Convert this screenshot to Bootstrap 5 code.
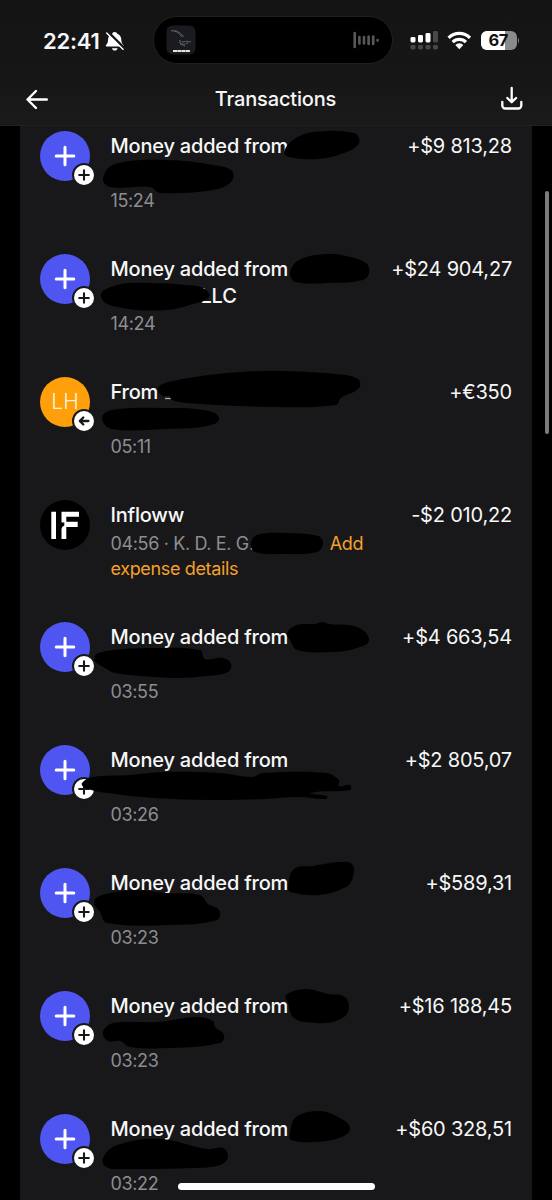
<!DOCTYPE html>
<html lang="en">
<head>
<meta charset="utf-8">
<meta name="viewport" content="width=device-width, initial-scale=1">
<title>Transactions</title>
<link href="https://cdn.jsdelivr.net/npm/bootstrap@5.3.0/dist/css/bootstrap.min.css" rel="stylesheet">
<style>
body{background:#000;color:#f7f7f8;font-family:Inter,"Liberation Sans",sans-serif;height:1200px;overflow:hidden}
.screen{width:552px;height:1200px}
.topbar{height:126px;background:linear-gradient(#141415,#161617 60%,#1a1a1b);border-bottom:1px solid #202022}
.status{height:80px;padding-top:16px}
.clock{font-size:22px;font-weight:600;line-height:50px;margin-left:43px;width:62px;letter-spacing:-.2px}
.island{width:240px;height:48px;border-radius:24px;background:#000;border:1px solid #202021;margin-left:28px;padding:0 13px 0 12px}
.appbar{height:38px}
.appbar h1{font-size:20px;font-weight:450;line-height:38px;letter-spacing:-.17px;padding-left:2px}
.sheet{width:512px;height:1074px;margin-left:20px;background:#18181a;padding:5px 20px 0}
.txn{height:123px;gap:20.5px}
.txn.short{height:122px}
.avatar{width:50px;height:50px;flex:none;border-radius:50%;background:#4f55f1}
.avatar.person{background:#ff9f0a;color:#fff2dc;font-size:21px;font-weight:300}
.avatar.brand{background:#000}
.mini{left:32px;top:32px;width:24px;height:24px;border-radius:50%;background:#fff;border:2px solid #18181a}
.ttl{font-size:20px;font-weight:470;line-height:27px;letter-spacing:-.2px;padding-top:2px;width:255px}
.llc{padding-left:90px}
.sub{font-size:18px;line-height:25px;color:#8d8d91;margin-top:1px;letter-spacing:-.36px;font-weight:400}
.txn.short .sub{margin-top:2px;width:255px}
.add{color:#f5a12c}
.gap-name{margin-left:76px}
.amt{font-size:20px;line-height:27px;padding-top:2px;font-weight:400;letter-spacing:-.2px}
.marks{left:0;top:0;pointer-events:none}
.thumb{left:545px;top:191px;width:4px;height:243px;border-radius:2px;background:#7c7c7e}
.home{left:178px;top:1183px;width:197px;height:7px;border-radius:4px;background:#fff}
</style>
</head>
<body>
<svg class="d-none">
  <symbol id="plus" viewBox="0 0 50 50"><path d="M25 16.200v17.600M16.200 25h17.600" stroke="#fff" stroke-width="3" stroke-linecap="round"/></symbol>
  <symbol id="plus-s" viewBox="0 0 20 20"><path d="M10 5.200v9.600M5.200 10h9.600" stroke="#18181a" stroke-width="2.100" stroke-linecap="round"/></symbol>
  <symbol id="left-s" viewBox="0 0 20 20"><path d="M14.400 10H5.900M9.300 6.500 5.800 10l3.500 3.500" fill="none" stroke="#18181a" stroke-width="2.300" stroke-linecap="round" stroke-linejoin="round"/></symbol>
</svg>
<div class="screen position-relative overflow-hidden">
  <header class="topbar">
    <div class="status d-flex align-items-start">
      <div class="clock">22:41</div>
      <svg width="20" height="50" viewBox="105 16 20 50"><path d="M114.700 32c-1.600 0-2.300 1-2.500 1.800-3 1-4.200 3.600-4.200 6.700 0 2-.8 3.200-1.900 4.500-.6.800-.2 1.600.7 1.600h15.900c.9 0 1.200-.8.600-1.600-1.100-1.300-1.900-2.500-1.900-4.500 0-3.100-1.200-5.700-4.200-6.700-.2-.8-.9-1.800-2.500-1.800zM112 48.200c.3 1.500 1.400 2.300 2.800 2.300s2.500-.8 2.800-2.300z" fill="#fff"/><path d="M107.500 31.500 124 48" stroke="#151516" stroke-width="2.600"/><path d="M106.700 33 123 49.200" stroke="#fff" stroke-width="1.500" stroke-linecap="round"/></svg>
      <div class="island d-flex align-items-center justify-content-between">
        <svg width="30" height="30" viewBox="0 0 30 30"><rect x=".5" y=".5" width="29" height="29" rx="6" fill="#1a1b1e"/><path d="M5 6c5-1 9 1 13 6M8 6c4 1 6 3 8 6M13 15c3 4 6 0 12 2M13 17c4 3 6 3 10 0M14 19l5 2" fill="none" stroke="#68717f" stroke-width=".9" stroke-dasharray="3 .6"/><path d="M7 26h17" stroke="#e4e4e4" stroke-width="2" stroke-dasharray="4 .3"/></svg>
        <svg width="27" height="18" viewBox="0 0 27 18"><g stroke="#59595c" stroke-width="2.600" stroke-linecap="round"><path d="M2.700 2v14"/><path d="M7.400 6v6.500M12 6v6.500M16.600 5.500v7.500M21.200 5.500v7.500M25.600 9v.4"/></g></svg>
      </div>
      <svg width="109" height="50" viewBox="408 16 109 50" style="margin-left:15px">
        <g fill="#fff"><rect x="410.500" y="37" width="5" height="5.500" rx="1.400"/><rect x="418" y="35" width="5" height="7.500" rx="1.400"/><rect x="425.500" y="33" width="5" height="9.500" rx="1.400"/></g>
        <g fill="#48484a"><rect x="433" y="31" width="5" height="11.500" rx="1.400"/><rect x="410.500" y="45" width="5" height="4.500" rx="1.400"/><rect x="418" y="45" width="5" height="4.500" rx="1.400"/><rect x="425.500" y="45" width="5" height="4.500" rx="1.400"/><rect x="433" y="45" width="5" height="4.500" rx="1.400"/></g>
        <g fill="none" stroke="#fff" stroke-width="3.200"><path d="M448.600 37.800a15.200 15.200 0 0 1 21.400 0"/><path d="M452.700 42.200a9.200 9.200 0 0 1 13.200 0"/></g><path d="M455.300 45a5.600 5.600 0 0 1 8 0l-4 4.300z" fill="#fff"/>
        <clipPath id="cell"><rect x="481" y="31" width="36" height="19" rx="6"/></clipPath>
        <g clip-path="url(#cell)"><rect x="481" y="31" width="36" height="19" fill="#8b8b8c"/><rect x="481" y="31" width="24" height="19" fill="#fff"/></g>
        <text x="498.300" y="46.400" text-anchor="middle" font-size="16.500" font-weight="700" letter-spacing="-.4" fill="#111">67</text>
      </svg>
      <svg width="3" height="50" viewBox="517 16 3 50"><path d="M518 37.500q2 3 0 6z" fill="#8b8b8c"/></svg>
    </div>
    <div class="appbar d-flex align-items-center position-relative">
      <svg width="26" height="24" viewBox="24 87 26 24" style="margin-left:24px"><path d="M46.800 99.500H27.500M36 91l-8.500 8.500L36 108" fill="none" stroke="#fff" stroke-width="2.400" stroke-linecap="round" stroke-linejoin="round"/></svg>
      <h1 class="m-0 flex-fill text-center">Transactions</h1>
      <svg width="26" height="26" viewBox="499 86 26 26" style="margin-right:27px"><path d="M511.700 88v13.500M507.300 98l4.400 4.300 4.400-4.300M502.300 102v3.500a3 3 0 0 0 3 3h13a3 3 0 0 0 3-3V102" fill="none" stroke="#fff" stroke-width="2.300" stroke-linecap="round" stroke-linejoin="round"/></svg>
    </div>
  </header>

  <main class="sheet">
    <div class="txn d-flex"><div class="avatar position-relative"><svg width="50" height="50"><use href="#plus"/></svg><span class="mini position-absolute d-flex"><svg width="20" height="20"><use href="#plus-s"/></svg></span></div><div><div class="ttl">Money added from<br>&nbsp;</div><div class="sub">15:24</div></div><div class="amt ms-auto text-nowrap">+$9 813,28</div></div>
    <div class="txn d-flex"><div class="avatar position-relative"><svg width="50" height="50"><use href="#plus"/></svg><span class="mini position-absolute d-flex"><svg width="20" height="20"><use href="#plus-s"/></svg></span></div><div><div class="ttl">Money added from<br><span class="llc">LLC</span></div><div class="sub">14:24</div></div><div class="amt ms-auto text-nowrap">+$24 904,27</div></div>
    <div class="txn d-flex"><div class="avatar person position-relative d-flex align-items-center justify-content-center">LH<span class="mini position-absolute d-flex"><svg width="20" height="20"><use href="#left-s"/></svg></span></div><div><div class="ttl">From<br>&nbsp;</div><div class="sub">05:11</div></div><div class="amt ms-auto text-nowrap">+€350</div></div>
    <div class="txn short d-flex"><div class="avatar brand"><svg width="50" height="50" viewBox="0 0 50 50"><path d="M11.300 11.700H16V39h-4.700zM21.500 11.700H39v5H26.300v5H37.700V27H26.300v12h-4.800V29q0-2.500 2.800-3.500v-3h-2.800z" fill="#fff"/></svg></div><div><div class="ttl">Infloww</div><div class="sub text-nowrap">04:56 · K. D. E. G.<span class="add gap-name">Add</span><br><span class="add">expense details</span></div></div><div class="amt ms-auto text-nowrap">-$2 010,22</div></div>
    <div class="txn d-flex"><div class="avatar position-relative"><svg width="50" height="50"><use href="#plus"/></svg><span class="mini position-absolute d-flex"><svg width="20" height="20"><use href="#plus-s"/></svg></span></div><div><div class="ttl">Money added from<br>&nbsp;</div><div class="sub">03:55</div></div><div class="amt ms-auto text-nowrap">+$4 663,54</div></div>
    <div class="txn d-flex"><div class="avatar position-relative"><svg width="50" height="50"><use href="#plus"/></svg><span class="mini position-absolute d-flex"><svg width="20" height="20"><use href="#plus-s"/></svg></span></div><div><div class="ttl">Money added from<br>&nbsp;</div><div class="sub">03:26</div></div><div class="amt ms-auto text-nowrap">+$2 805,07</div></div>
    <div class="txn d-flex"><div class="avatar position-relative"><svg width="50" height="50"><use href="#plus"/></svg><span class="mini position-absolute d-flex"><svg width="20" height="20"><use href="#plus-s"/></svg></span></div><div><div class="ttl">Money added from<br>&nbsp;</div><div class="sub">03:23</div></div><div class="amt ms-auto text-nowrap">+$589,31</div></div>
    <div class="txn d-flex"><div class="avatar position-relative"><svg width="50" height="50"><use href="#plus"/></svg><span class="mini position-absolute d-flex"><svg width="20" height="20"><use href="#plus-s"/></svg></span></div><div><div class="ttl">Money added from<br>&nbsp;</div><div class="sub">03:23</div></div><div class="amt ms-auto text-nowrap">+$16 188,45</div></div>
    <div class="txn d-flex"><div class="avatar position-relative"><svg width="50" height="50"><use href="#plus"/></svg><span class="mini position-absolute d-flex"><svg width="20" height="20"><use href="#plus-s"/></svg></span></div><div><div class="ttl">Money added from<br>&nbsp;</div><div class="sub">03:22</div></div><div class="amt ms-auto text-nowrap">+$60 328,51</div></div>
  </main>

  <svg id="marks" class="marks position-absolute" width="552" height="1200"><path d="M165 398.500h6" stroke="#aaa" stroke-width="1.300"/></svg>
  <div class="thumb position-absolute"></div>
  <div class="home position-absolute"></div>
</div>
<script src="https://cdn.jsdelivr.net/npm/bootstrap@5.3.0/dist/js/bootstrap.bundle.min.js"></script>
<script>
// Outlines of the black marker strokes that hide the senders' names
const outlines = [
 [284,152,293,140,313,132,354,133,359,143,344,153,318,159,289,157],
 [103,178,115,164,167,160,213,165,232,171,231,182,213,190,160,193,150,187,110,187],
 [290,273,299,260,326,254,346,256,366,263,369,273,363,280,326,283,296,282],
 [101,297,117,285,150,283,187,285,203,288,209,297,193,304,167,310,123,308],
 [158,388,173,381,227,373,276,371,336,374,358,379,359,388,341,398,336,405,276,407,187,403,172,400,169,396,163,396],
 [102,418,112,410,163,408,203,410,219,418,207,426,163,429,112,429],
 [251,543,257,535,283,533,318,536,323,543,317,552,283,554,255,552],
 [287,633,297,625,315,624,323,622,329,624,357,627,369,640,357,648,333,652,297,650,290,640],
 [94,658,107,651,153,648,200,650,205,659,223,658,231,664,228,672,207,676,177,678,142,676,115,673,105,668],
 [82,783,93,777,130,775,163,772,220,773,252,777,263,773,326,773,339,780,339,786,350,785,350,790,311,793,327,796,326,799,299,797,263,799,213,800,153,798,107,793,85,788],
 [288,887,294,869,313,866,339,862,352,864,353,877,346,887,319,895,290,892],
 [94,902,102,895,133,890,167,893,200,895,208,904,219,910,217,920,170,925,107,923,100,912],
 [286,995,306,989,328,994,345,997,348,1012,336,1021,316,1023,294,1018,288,1003],
 [103,1032,113,1023,157,1022,197,1017,213,1021,215,1027,224,1035,220,1043,170,1048,130,1047,120,1041,108,1041],
 [290,1133,296,1117,319,1111,336,1116,350,1128,339,1138,313,1142,291,1140],
 [103,1158,117,1145,160,1139,207,1149,223,1148,228,1157,220,1165,193,1168,120,1169,106,1167]
];
const svg = document.getElementById('marks');
for (const o of outlines) {
  const n = o.length / 2, p = i => [o[((i + n) % n) * 2], o[((i + n) % n) * 2 + 1]];
  let d = 'M' + p(0);
  for (let i = 0; i < n; i++) {
    const a = p(i - 1), b = p(i), c = p(i + 1), e = p(i + 2);
    const len = Math.hypot(c[0] - b[0], c[1] - b[1]);
    const k1 = len / Math.max(Math.hypot(c[0] - a[0], c[1] - a[1]), 1) * .35;
    const k2 = len / Math.max(Math.hypot(e[0] - b[0], e[1] - b[1]), 1) * .35;
    d += 'C' + [b[0] + (c[0] - a[0]) * k1, b[1] + (c[1] - a[1]) * k1, c[0] - (e[0] - b[0]) * k2, c[1] - (e[1] - b[1]) * k2, ...c];
  }
  const path = document.createElementNS('http://www.w3.org/2000/svg', 'path');
  path.setAttribute('d', d + 'Z');
  svg.append(path);
}
</script>
</body>
</html>
